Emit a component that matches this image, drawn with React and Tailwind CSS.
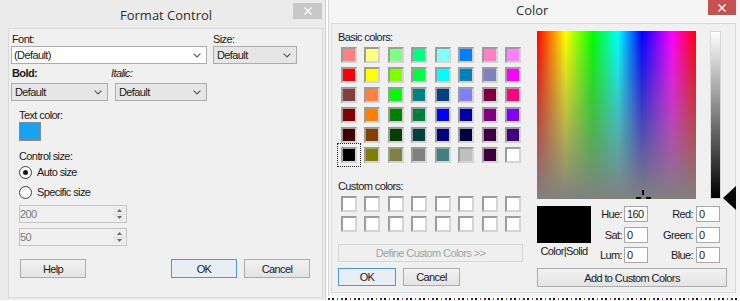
import clsx from "clsx";

const basicColors = [
  ["#ff8080", "#ffff80", "#80ff80", "#00ff80", "#80ffff", "#0080ff", "#ff80c0", "#ff80ff"],
  ["#ff0000", "#ffff00", "#80ff00", "#00ff40", "#00ffff", "#0080c0", "#8080c0", "#ff00ff"],
  ["#804040", "#ff8040", "#00ff00", "#008080", "#004080", "#8080ff", "#800040", "#ff0080"],
  ["#800000", "#ff8000", "#008000", "#008040", "#0000ff", "#0000a0", "#800080", "#8000ff"],
  ["#400000", "#804000", "#004000", "#004040", "#000080", "#000040", "#400040", "#400080"],
  ["#000000", "#808000", "#808040", "#808080", "#408080", "#c0c0c0", "#400040", "#ffffff"],
];

function Chevron() {
  return (
    <svg width="8" height="5" viewBox="0 0 8 5">
      <path d="M0.6 0.6L4 4L7.4 0.6" fill="none" stroke="#5a5a5a" strokeWidth="1.2" />
    </svg>
  );
}

function CloseX() {
  return (
    <svg width="8" height="8" viewBox="0 0 8 8">
      <path d="M0.5 0.5L7.5 7.5M7.5 0.5L0.5 7.5" stroke="#fff" strokeWidth="1.4" />
    </svg>
  );
}

function Combo({ value, white, className }) {
  return (
    <div
      className={clsx(
        "flex h-[18px] items-center border pr-[5px]",
        white ? "border-[#abadb3] bg-white pl-[2px]" : "border-[#acacac] bg-[#e6e6e6] pl-[3px]",
        className
      )}
    >
      <span className="flex-1">{value}</span>
      <Chevron />
    </div>
  );
}

function Btn({ children, primary, disabled, className }) {
  return (
    <div
      className={clsx(
        "flex items-center justify-center border",
        primary && "border-[#4a96e0] bg-[#e9eef4]",
        disabled && "border-[#d6d6d6] bg-[#efefef] text-[#a3a3a3]",
        !primary && !disabled && "border-[#acacac] [background-image:linear-gradient(#f2f2f2,#e3e3e3)]",
        className
      )}
    >
      {children}
    </div>
  );
}

function Radio({ checked, label, className }) {
  return (
    <div className={clsx("flex h-[18px] items-center gap-[5px]", className)}>
      <span className="flex h-[13px] w-[13px] items-center justify-center rounded-full border border-[#3c3c3c] bg-white">
        {checked && <span className="h-[5px] w-[5px] rounded-full bg-[#1a1a1a]" />}
      </span>
      <span>{label}</span>
    </div>
  );
}

function Spin({ value, className }) {
  return (
    <div className={clsx("flex h-[18px] w-[108px] border border-[#c3c3c3] bg-[#f0f0f0]", className)}>
      <span className="flex-1 leading-[16px] text-[#7a7a7a]">{value}</span>
      <div className="flex w-[13px] flex-col py-[1px] pr-[1px]">
        <div className="flex flex-1 items-center justify-center border-b border-[#dcdcdc] bg-[#ececec]">
          <svg width="5" height="3" viewBox="0 0 5 3">
            <path d="M0 3L2.5 0L5 3Z" fill="#6a6a6a" />
          </svg>
        </div>
        <div className="flex flex-1 items-center justify-center bg-[#ececec]">
          <svg width="5" height="3" viewBox="0 0 5 3">
            <path d="M0 0L2.5 3L5 0Z" fill="#6a6a6a" />
          </svg>
        </div>
      </div>
    </div>
  );
}

function Swatch({ color, selected }) {
  return (
    <div className="relative h-[16px] w-[16px]">
      <div
        className={clsx(
          "h-full w-full border-2 border-t-[#9c9c9c] border-l-[#9c9c9c] border-r-[#d4d4d4] border-b-[#d4d4d4]",
          selected && "border-t-[#3a3a3a] border-l-[#3a3a3a] border-r-[#5a5a5a] border-b-[#5a5a5a]"
        )}
        style={{ backgroundColor: color }}
      />
      {selected && <div className="absolute -inset-[4px] border border-dotted border-[#222]" />}
    </div>
  );
}

function FormatControl() {
  return (
    <div className="flex h-[300px] w-[326px] flex-col border-r border-[#cfcfcf] bg-[#ebebeb]">
      <div className="flex h-[28px] items-start">
        <div className="pl-[120px] pt-[5px] font-['Open_Sans',sans-serif] text-[13px] leading-[20px] tracking-normal text-[#2e2e2e]">
          Format Control
        </div>
        <div className="ml-auto mr-[3px] mt-[3px] flex h-[16px] w-[29px] items-center justify-center bg-[#c7c7c7]">
          <CloseX />
        </div>
      </div>
      <div className="ml-[8px] h-[270px] w-[315px] border border-[#d9d9d9] bg-[#f0f0f0]">
        <div className="flex pl-[2px] pt-[3px]">
          <div className="w-[196px]">
            <div className="pl-[1px]">Font:</div>
            <Combo white value="(Default)" className="w-[196px]" />
          </div>
          <div className="ml-[6px]">
            <div>Size:</div>
            <Combo value="Default" className="w-[84px]" />
          </div>
        </div>
        <div className="mt-[2px] flex pl-[2px]">
          <div className="w-[97px]">
            <div className="pl-[1px] font-bold">Bold:</div>
            <Combo value="Default" className="mt-[3px] w-[97px]" />
          </div>
          <div className="ml-[7px]">
            <div className="-ml-[4px] italic">Italic:</div>
            <Combo value="Default" className="mt-[3px] w-[92px]" />
          </div>
        </div>
        <div className="pl-[10px]">
          <div className="mt-[7px]">Text color:</div>
          <div className="h-[19px] w-[22px] border border-[#8a8a8a] bg-[#1ba1f2]" />
          <div className="mt-[8px]">Control size:</div>
          <Radio checked label="Auto size" />
          <Radio label="Specific size" className="mt-[2px]" />
          <Spin value="200" className="mt-[4px]" />
          <Spin value="50" className="mt-[5px]" />
          <div className="mt-[13px] flex">
            <Btn className="ml-[1px] h-[19px] w-[66px]">Help</Btn>
            <Btn primary className="ml-[85px] h-[19px] w-[66px]">OK</Btn>
            <Btn className="ml-[7px] h-[19px] w-[66px]">Cancel</Btn>
          </div>
        </div>
      </div>
    </div>
  );
}

function NumField({ label, value, labelWidth, gap }) {
  return (
    <div className="flex h-[16px] items-center">
      <span className={clsx("text-right", labelWidth)}>{label}</span>
      <span className={clsx("h-[16px] w-[24px] border border-[#a8a8a8] bg-white pl-[2px] leading-[14px]", gap)}>
        {value}
      </span>
    </div>
  );
}

function ColorDialog() {
  return (
    <div className="flex h-[296px] w-[412px] flex-col border-l border-[#d6d6d6] bg-[#f5f5f5]">
      <div className="flex h-[23px] items-start">
        <div className="pl-[187px] font-['Open_Sans',sans-serif] text-[13px] leading-[20px] tracking-normal text-[#2e2e2e]">
          Color
        </div>
        <div className="ml-auto mr-[4px] flex h-[15px] w-[28px] items-center justify-center bg-[#c75050]">
          <CloseX />
        </div>
      </div>
      <div className="ml-[2px] flex h-[270px] w-[405px] border border-[#d9d9d9] bg-[#f0f0f0]">
        <div className="w-[205px] pl-[6px] pt-[6px]">
          <div>Basic colors:</div>
          <div className="ml-[3px] mt-[3px] grid grid-cols-[repeat(8,16px)] gap-x-[7.43px] gap-y-[4px]">
            {basicColors.flat().map((c, i) => (
              <Swatch key={i} color={c} selected={i === 40} />
            ))}
          </div>
          <div className="mt-[16px]">Custom colors:</div>
          <div className="ml-[3px] mt-[3px] grid grid-cols-[repeat(8,16px)] gap-x-[7.43px] gap-y-[4px]">
            {Array.from({ length: 16 }).map((_, i) => (
              <Swatch key={i} color="#ffffff" />
            ))}
          </div>
          <Btn disabled className="mt-[12px] h-[18px] w-[185px]">
            Define Custom Colors &gt;&gt;
          </Btn>
          <div className="mt-[6px] flex gap-[7px]">
            <Btn primary className="h-[18px] w-[58px]">OK</Btn>
            <Btn className="h-[18px] w-[57px]">Cancel</Btn>
          </div>
        </div>
        <div className="pt-[7px]">
          <div className="relative flex">
            <div className="relative h-[168px] w-[159px] [background-image:linear-gradient(to_bottom,rgba(128,128,128,0),#808080),linear-gradient(to_right,#ff0000,#ffff00_18%,#00ff00_35%,#00ffff_51%,#0000ff_66%,#ff00ff_85%,#ff0000)]">
              <div className="absolute left-[105px] top-[159px] h-[5px] w-[2px] bg-black" />
              <div className="absolute left-[99px] top-[166px] h-[2px] w-[5px] bg-black" />
              <div className="absolute left-[109px] top-[166px] h-[2px] w-[5px] bg-black" />
            </div>
            <div className="ml-[14px] h-[168px] w-[11px] border border-[#d8d8d8] [background-image:linear-gradient(to_bottom,#ffffff,#000000)]" />
            <svg className="absolute left-[186px] top-[155px]" width="13" height="24" viewBox="0 0 13 24">
              <path d="M0 12L13 0L13 24Z" fill="#000" />
            </svg>
          </div>
          <div className="mt-[7px] flex">
            <div className="w-[54px]">
              <div className="h-[37px] w-[54px] bg-black" />
              <div className="mt-[1px] text-center">Color|Solid</div>
            </div>
            <div className="flex flex-col gap-[4.5px]">
              <NumField label="Hue:" value="160" labelWidth="w-[31px]" gap="ml-[2px]" />
              <NumField label="Sat:" value="0" labelWidth="w-[31px]" gap="ml-[2px]" />
              <NumField label="Lum:" value="0" labelWidth="w-[31px]" gap="ml-[2px]" />
            </div>
            <div className="flex flex-col gap-[4.5px]">
              <NumField label="Red:" value="0" labelWidth="w-[45px]" gap="ml-[3px]" />
              <NumField label="Green:" value="0" labelWidth="w-[45px]" gap="ml-[3px]" />
              <NumField label="Blue:" value="0" labelWidth="w-[45px]" gap="ml-[3px]" />
            </div>
          </div>
          <Btn className="mt-[5px] h-[19px] w-[190px]">Add to Custom Colors</Btn>
        </div>
      </div>
    </div>
  );
}

export default function App() {
  return (
    <div className="flex h-[301px] w-[740px] overflow-hidden bg-white font-['Liberation_Sans',Arial,sans-serif] text-[11px] leading-[14px] tracking-[-0.6px] text-[#1a1a1a]">
      <FormatControl />
      <div className="ml-[2px] flex flex-col">
        <ColorDialog />
        <div className="mt-[2px] h-[2px] w-[412px] [background-image:repeating-linear-gradient(to_right,#2a2ab0_0_2px,transparent_2px_4px,#111_4px_6px,transparent_6px_9px,#c03030_9px_10px,transparent_10px_13px)]" />
      </div>
    </div>
  );
}
